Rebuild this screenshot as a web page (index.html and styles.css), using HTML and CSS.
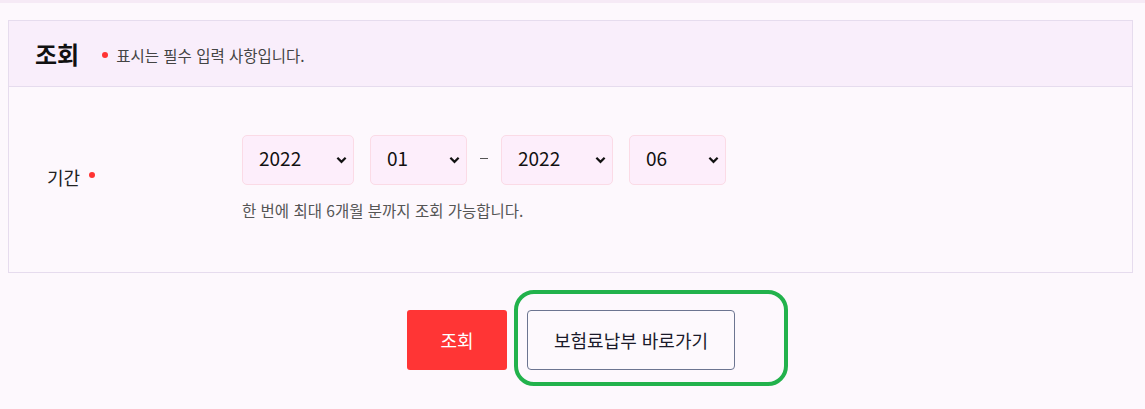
FILE: index.html
```html
<!DOCTYPE html>
<html lang="ko">
<head>
  <meta charset="UTF-8">
  <meta name="viewport" content="width=device-width, initial-scale=1.0">
  <title>조회</title>
  <link rel="stylesheet" href="styles.css">
</head>
<body>
  <div class="top-line"></div>
  <div class="panel">
    <div class="panel-head">
      <h2>조회</h2>
      <p class="note"><span class="dot"></span>표시는 필수 입력 사항입니다.</p>
    </div>
    <div class="panel-body">
      <div class="label">기간<span class="dot"></span></div>
      <div class="field">
        <div class="selects">
          <div class="select w-year"><span>2022</span><svg viewBox="0 0 12 8"><path d="M1.5 1.5 6 6l4.5-4.5"/></svg></div>
          <div class="select w-month"><span>01</span><svg viewBox="0 0 12 8"><path d="M1.5 1.5 6 6l4.5-4.5"/></svg></div>
          <span class="dash"></span>
          <div class="select w-year"><span>2022</span><svg viewBox="0 0 12 8"><path d="M1.5 1.5 6 6l4.5-4.5"/></svg></div>
          <div class="select w-month"><span>06</span><svg viewBox="0 0 12 8"><path d="M1.5 1.5 6 6l4.5-4.5"/></svg></div>
        </div>
        <p class="help">한 번에 최대 6개월 분까지 조회 가능합니다.</p>
      </div>
    </div>
  </div>
  <div class="actions">
    <button class="btn btn-red" type="button">조회</button>
    <div class="mark-wrap">
      <button class="btn btn-line" type="button">보험료납부 바로가기</button>
      <div class="mark"></div>
    </div>
  </div>
</body>
</html>
```

FILE: styles.css
```css
body {
  margin: 0;
  min-height: 409px;
  background-color: #fdf8fd;
  font-family: "Noto Sans CJK KR", "Noto Sans", sans-serif;
  color: #222;
}

.top-line {
  height: 3px;
  background-color: #f6eaf6;
}

.panel {
  margin: 17px 12px 0 8px;
  border: 1px solid #e6dcee;
}

.panel-head {
  display: flex;
  align-items: center;
  height: 65px;
  padding-left: 26px;
  background-color: #f9eefb;
  border-bottom: 1px solid #e6dcee;
}

.panel-head h2 {
  margin: 0;
  font-size: 24px;
  font-weight: 700;
  color: #111;
}

.note {
  display: flex;
  align-items: center;
  margin: 2px 0 0 23px;
  font-size: 15.5px;
  color: #444;
}

.dot {
  display: inline-block;
  width: 6px;
  height: 6px;
  border-radius: 50%;
  background-color: #f33;
  margin-right: 8px;
}

.panel-body {
  display: flex;
  align-items: center;
  padding: 48px 0 51px;
  background-color: #fdf8fd;
}

.label {
  display: flex;
  align-items: center;
  width: 195px;
  padding: 0 0 2px 38px;
  font-size: 18px;
  color: #222;
}

.label .dot {
  margin: 0 0 4px 9px;
}

.selects {
  display: flex;
  align-items: center;
  gap: 16px;
}

.select {
  display: flex;
  align-items: center;
  justify-content: space-between;
  box-sizing: border-box;
  height: 50px;
  padding: 0 6px 0 16px;
  background-color: #fdeefb;
  border: 1px solid #fbdbe6;
  border-radius: 5px;
  font-size: 19px;
  color: #111;
}

.select span {
  margin-bottom: 5px;
}

.w-year { width: 112px; }
.w-month { width: 97px; }

.select svg {
  width: 11px;
  height: 8px;
  fill: none;
  stroke: #111;
  stroke-width: 2.4;
}

.dash {
  width: 8px;
  height: 1px;
  margin: 0 -3px 4px;
  background-color: #555;
}

.help {
  margin: 14px 0 0;
  font-size: 15.5px;
  color: #555;
}

.actions {
  display: flex;
  justify-content: center;
  gap: 20px;
  margin-top: 37px;
  padding-right: 3px;
}

.btn {
  height: 60px;
  font-family: inherit;
  font-size: 18px;
  cursor: pointer;
}

.btn-red {
  width: 100px;
  border: none;
  border-radius: 3px;
  background-color: #ff3535;
  color: #fff;
}

.btn-line {
  width: 208px;
  border: 1px solid #6c7591;
  border-radius: 4px;
  background-color: #fdf9fd;
  color: #1a1a2a;
}

.mark-wrap {
  position: relative;
}

.mark {
  position: absolute;
  left: -13px;
  top: -20px;
  width: 274px;
  height: 96px;
  box-sizing: border-box;
  border: 4px solid #22b24c;
  border-radius: 20px;
  pointer-events: none;
}
```
